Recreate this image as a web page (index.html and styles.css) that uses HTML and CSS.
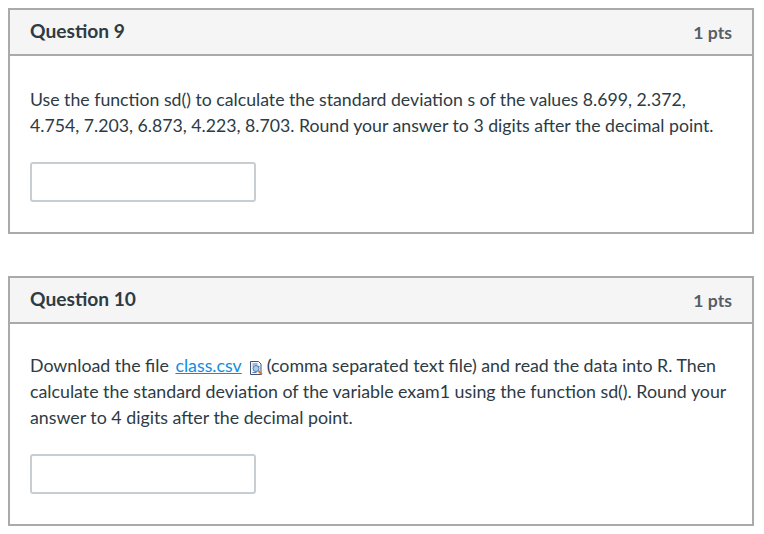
FILE: index.html

```html
<!DOCTYPE html>
<html lang="en">
<head>
  <meta charset="UTF-8">
  <title>Quiz</title>
  <link rel="stylesheet" href="styles.css">
</head>
<body>

  <div class="question first">
    <div class="question-header">
      <div class="question-name">Question 9</div>
      <div class="points">1 pts</div>
    </div>
    <div class="question-body">
      <p>Use the function sd() to calculate the standard deviation s of the values 8.699, 2.372,<br>4.754, 7.203, 6.873, 4.223, 8.703. Round your answer to 3 digits after the decimal point.</p>
      <input class="answer" type="text">
    </div>
  </div>

  <div class="question">
    <div class="question-header">
      <div class="question-name">Question 10</div>
      <div class="points">1 pts</div>
    </div>
    <div class="question-body">
      <p>Download the file <a class="file-link" href="#">class.csv</a><svg class="preview-icon" width="14" height="16" viewBox="0 0 14 16">
          <path d="M1.500 1.500h8l2.500 2.500v10.500h-10.500z" fill="#f2f5fa" stroke="#3f5476"/>
          <path d="M3.500 4h5M3.500 6h1.500M9 6.500h1.500M3.500 12.500h4" stroke="#5b7fb5"/>
          <circle cx="7" cy="8.500" r="3" fill="#a9cbec" stroke="#4f78ad"/>
          <path d="M9.500 11l3.500 3.500" stroke="#d8762a" stroke-width="2"/>
        </svg>(comma separated text file) and read the data into R. Then<br>calculate the standard deviation of the variable exam1 using the function sd(). Round your<br>answer to 4 digits after the decimal point.</p>
      <input class="answer" type="text">
    </div>
  </div>

</body>
</html>
```

FILE: styles.css

```css
body {
  margin: 0;
  padding: 8px 10px 0 8px;
  background: #fff;
  color: #2d3b45;
  font-family: Lato, Arial, sans-serif;
}
.question {
  border: 2px solid #aaa;
}
.first {
  margin-bottom: 42px;
}
.question-header {
  display: flex;
  justify-content: space-between;
  align-items: center;
  height: 44px;
  padding: 0 20px;
  background: #f5f5f5;
  border-bottom: 2px solid #aaa;
}
.question-name {
  font-size: 19.2px;
  font-weight: bold;
  margin-top: -4px;
}
.points {
  font-size: 17.6px;
  font-weight: bold;
  color: #555f66;
}
.question-body {
  padding: 28px 20px 30px;
}
.first .question-body {
  padding: 31px 20px 30px;
}
.question-body p {
  margin: 0 0 24px;
  font-size: 17.8px;
  line-height: 26px;
}
.first .question-body p {
  margin-bottom: 23px;
  font-size: 17.7px;
}
.file-link {
  color: #0f8ee0;
  margin-left: 2px;
}
.preview-icon {
  vertical-align: -4px;
  margin: 0 4px 0 7px;
}
.answer {
  display: block;
  box-sizing: border-box;
  width: 226px;
  height: 40px;
  margin: 0;
  padding: 4px 8px;
  background: #fff;
  border: 2px solid #c7cdd1;
  border-radius: 3px;
}
```
